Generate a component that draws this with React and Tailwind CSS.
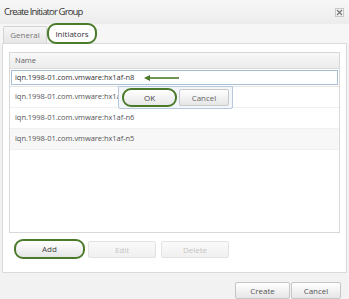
import React from "react";

const rows = [
  { id: "n7", text: "iqn.1998-01.com.vmware:hx1af-n7" },
  { id: "n6", text: "iqn.1998-01.com.vmware:hx1af-n6" },
  { id: "n5", text: "iqn.1998-01.com.vmware:hx1af-n5", alt: true },
];

const btn =
  "h-[17px] border rounded-[2px] text-[8px] flex items-center justify-center bg-gradient-to-b";

const App = () => {
  return (
    <div className="w-[349px] h-[299px] bg-[#f2f2f2] text-[#444] font-['Open_Sans',sans-serif] overflow-hidden">
      {/* title bar */}
      <div className="h-[24px] flex items-center justify-between pl-[4px] pr-[5px] bg-gradient-to-b from-[#f7f7f7] to-[#ececec]">
        <span className="text-[9.5px] tracking-[-0.85px] text-[#333]">Create Initiator Group</span>
        <div className="w-[9px] h-[9px] border border-[#c8c8c8] bg-[#f4f4f4] flex items-center justify-center">
          <svg width="7" height="7" viewBox="0 0 7 7">
            <path d="M1 1L6 6M6 1L1 6" stroke="#777" strokeWidth="1.3" />
          </svg>
        </div>
      </div>

      {/* tabs */}
      <div className="flex items-end gap-[2px] pl-[3px] h-[19px] bg-[#f6f6f6]">
        <div className="h-[17px] w-[44px] border border-b-0 border-[#d4d4d4] bg-gradient-to-b from-[#f6f6f6] to-[#e6e6e6] rounded-t-[2px] text-[8px] text-[#777] flex items-center justify-center">
          General
        </div>
        <div className="h-[17px] w-[46px] mb-[1px] bg-white rounded-[7px] outline-2 outline-[#4b7a2a] text-[8px] text-[#333] flex items-center justify-center">
          Initiators
        </div>
      </div>

      {/* panel */}
      <div className="mx-[2px] h-[230px] bg-white border border-[#dadada] pt-[8px] px-[6px] flex flex-col">
        <div className="relative h-[181px] border border-[#d8d8d8] bg-white">
          <div className="h-[16px] bg-gradient-to-b from-[#f8f8f8] to-[#ececec] border-b border-[#dcdcdc] pl-[5px] flex items-center text-[7.5px] text-[#666]">
            Name
          </div>
          <div className="h-[18px] px-[1px] pt-[1px] border-b border-[#e4e4e4]">
            <div className="h-[15px] border border-[#a9bfd6] bg-white flex items-center pl-[3px] text-[7.5px] tracking-[-0.05px] text-[#333]">
              iqn.1998-01.com.vmware:hx1af-n8
              <svg className="ml-[10px]" width="35" height="8" viewBox="0 0 35 8">
                <path d="M4 4H35" stroke="#4b7a2a" strokeWidth="1.6" />
                <path d="M0 4L6 1V7Z" fill="#4b7a2a" />
              </svg>
            </div>
          </div>
          {rows.map((r) => (
            <div
              key={r.id}
              className={`h-[21px] pl-[5px] flex items-center text-[7.5px] tracking-[-0.05px] text-[#555] border-b border-[#f0f0f0] ${r.alt ? "bg-[#f7f7f7]" : "bg-white"}`}
            >
              {r.text}
            </div>
          ))}

          {/* inline edit popup */}
          <div className="absolute left-[108px] top-[33px] w-[115px] h-[23px] bg-[#f3f7fb] border border-[#b8c8da] rounded-b-[2px] flex items-center gap-[4px] pl-[5px]">
            <div className="w-[51px] h-[15px] rounded-[7px] outline-2 outline-[#4b7a2a] bg-gradient-to-b from-white to-[#e8e8e8] text-[8px] text-[#444] flex items-center justify-center">
              OK
            </div>
            <div className={`${btn} w-[50px] h-[15px] border-[#c8c8c8] from-white to-[#e6e6e6] text-[#666]`}>
              Cancel
            </div>
          </div>
        </div>

        <div className="flex gap-[5px] mt-[8px] pl-[7px]">
          <div className="w-[67px] h-[16px] rounded-[7px] outline-2 outline-[#4b7a2a] bg-gradient-to-b from-white to-[#e6e6e6] text-[8px] text-[#444] flex items-center justify-center">
            Add
          </div>
          <div className={`${btn} w-[68px] border-[#e2e2e2] from-[#fafafa] to-[#f0f0f0] text-[#c4c4c4]`}>
            Edit
          </div>
          <div className={`${btn} w-[68px] border-[#e2e2e2] from-[#fafafa] to-[#f0f0f0] text-[#c4c4c4]`}>
            Delete
          </div>
        </div>
      </div>

      {/* footer */}
      <div className="flex justify-end gap-[1px] pr-[8px] pt-[9px]">
        <div className={`${btn} w-[55px] border-[#c6c6c6] from-white to-[#e6e6e6] text-[#555]`}>Create</div>
        <div className={`${btn} w-[50px] border-[#c6c6c6] from-white to-[#e6e6e6] text-[#555]`}>Cancel</div>
      </div>
    </div>
  );
};

export default App;
